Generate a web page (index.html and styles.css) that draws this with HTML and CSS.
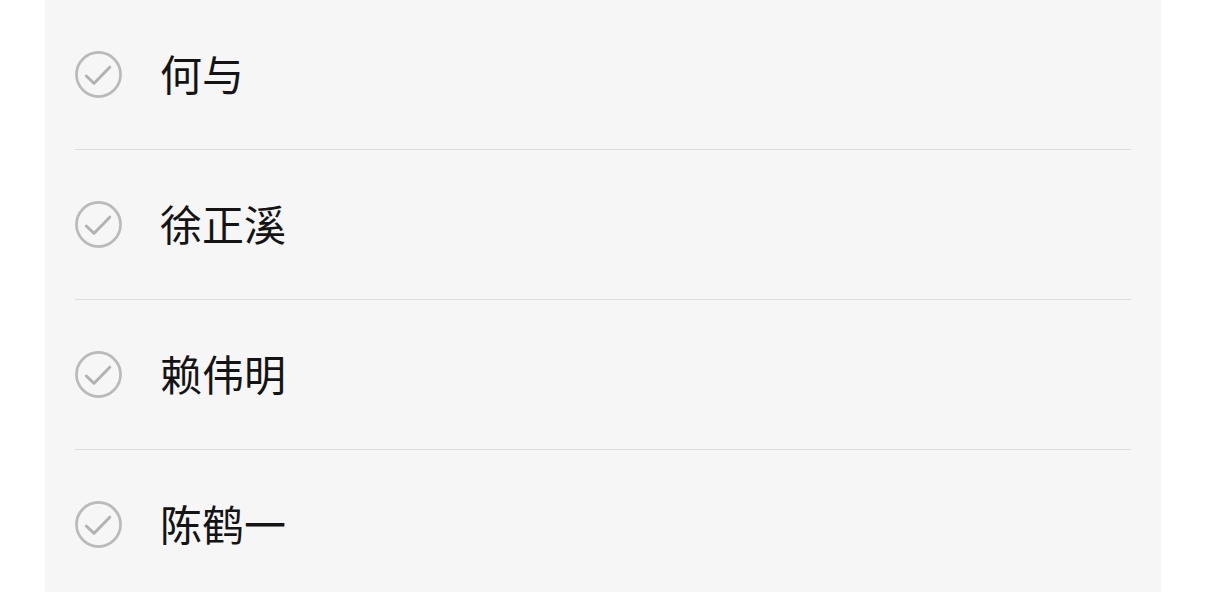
FILE: index.html
```html
<!DOCTYPE html>
<html lang="zh">

<head>
    <meta charset="UTF-8">
    <meta name="viewport" content="width=device-width, initial-scale=1.0">
    <title>名单</title>
    <link rel="stylesheet" href="styles.css">
</head>

<body>

    <div class="panel">
        <ul class="name-list">
            <li class="name-row">
                <svg class="check" viewBox="0 0 48 48"><circle cx="24" cy="24" r="22.5" /><path d="M11.5 25.5 L19.5 33 L35.5 16.5" /></svg>
                <span class="name">何与</span>
            </li>
            <li class="name-row">
                <svg class="check" viewBox="0 0 48 48"><circle cx="24" cy="24" r="22.5" /><path d="M11.5 25.5 L19.5 33 L35.5 16.5" /></svg>
                <span class="name">徐正溪</span>
            </li>
            <li class="name-row">
                <svg class="check" viewBox="0 0 48 48"><circle cx="24" cy="24" r="22.5" /><path d="M11.5 25.5 L19.5 33 L35.5 16.5" /></svg>
                <span class="name">赖伟明</span>
            </li>
            <li class="name-row">
                <svg class="check" viewBox="0 0 48 48"><circle cx="24" cy="24" r="22.5" /><path d="M11.5 25.5 L19.5 33 L35.5 16.5" /></svg>
                <span class="name">陈鹤一</span>
            </li>
        </ul>
    </div>

</body>

</html>
```

FILE: styles.css
```css
html,
body {
    margin: 0;
    height: 100%;
    background: #ffffff;
}

body {
    font-family: "Noto Sans CJK SC", "Noto Sans", sans-serif;
    color: #141414;
}

.panel {
    margin-left: 45px;
    width: 1116px;
    height: 100%;
    background: #f6f6f6;
    overflow: hidden;
}

.name-list {
    list-style: none;
    margin: 0;
    padding: 0 30px;
}

.name-row {
    display: flex;
    align-items: center;
    gap: 38px;
    height: 149px;
    border-bottom: 1px solid #dedede;
}

.check {
    width: 47px;
    height: 47px;
    flex: none;
}

.check circle {
    fill: none;
    stroke: #bababa;
    stroke-width: 2.8;
}

.check path {
    fill: none;
    stroke: #b2b2b2;
    stroke-width: 3;
    stroke-linecap: round;
    stroke-linejoin: round;
}

.name {
    font-size: 42px;
    line-height: 1;
    margin-top: -4px;
}
```
